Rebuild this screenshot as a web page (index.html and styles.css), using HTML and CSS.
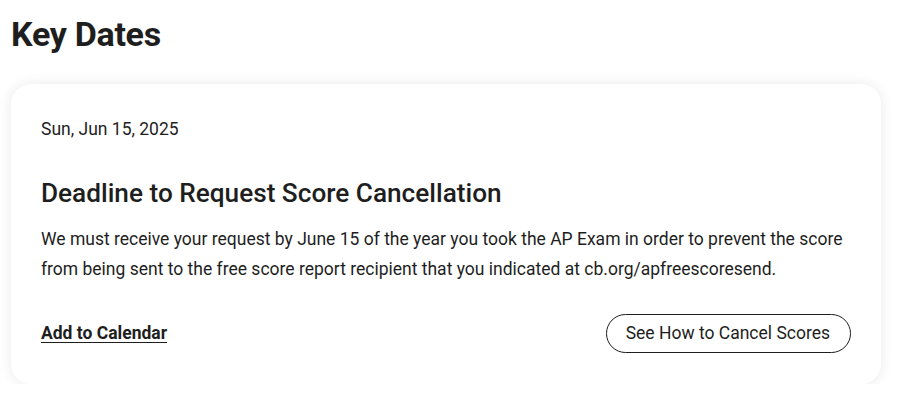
FILE: index.html
```html
<!DOCTYPE html>
<html lang="en">
<head>
<meta charset="utf-8">
<title>Key Dates</title>
<link rel="stylesheet" href="styles.css">
</head>
<body>
<main class="page">
  <h1 class="page-title">Key Dates</h1>
  <section class="card">
    <p class="card-date">Sun, Jun 15, 2025</p>
    <h2 class="card-title">Deadline to Request Score Cancellation</h2>
    <p class="card-text">We must receive your request by June 15 of the year you took the AP Exam in order to prevent the score from being sent to the free score report recipient that you indicated at cb.org/apfreescoresend.</p>
    <div class="card-actions">
      <a class="cal-link" href="#">Add to Calendar</a>
      <a class="pill-btn" href="#">See How to Cancel Scores</a>
    </div>
  </section>
</main>
</body>
</html>
```

FILE: styles.css
```css
* { box-sizing: border-box; }
html, body { margin: 0; padding: 0; background: #fff; }
body {
  font-family: Roboto, "Noto Sans", Arial, sans-serif;
  color: #1e1e1e;
}
.page {
  padding: 12px 20px 0 11px;
}
.page-title {
  margin: 0;
  font-size: 34px;
  font-weight: 700;
  line-height: 44px;
  letter-spacing: -0.3px;
}
.card {
  margin-top: 28px;
  width: 870px;
  background: #fff;
  border-radius: 20px;
  box-shadow: 0 0 14px rgba(0, 0, 0, 0.09);
  padding: 31px 30px 31px 30px;
}
.card-date {
  margin: 0;
  font-size: 17.5px;
  line-height: 28px;
}
.card-title {
  margin: 34px 0 0;
  font-size: 26.2px;
  font-weight: 500;
  line-height: 32px;
}
.card-text {
  margin: 15px 0 0;
  font-size: 17.5px;
  line-height: 30px;
}
.card-actions {
  margin-top: 30px;
  display: flex;
  justify-content: space-between;
  align-items: center;
}
.cal-link {
  color: #1e1e1e;
  font-weight: 700;
  font-size: 17.5px;
  text-decoration: underline;
  text-underline-offset: 3px;
  margin-top: -2px;
}
.pill-btn {
  color: #1e1e1e;
  text-decoration: none;
  font-size: 17.5px;
  line-height: 19px;
  padding: 9px 20px 9px 19px;
  border: 1px solid #1e1e1e;
  border-radius: 20px;
}
```
